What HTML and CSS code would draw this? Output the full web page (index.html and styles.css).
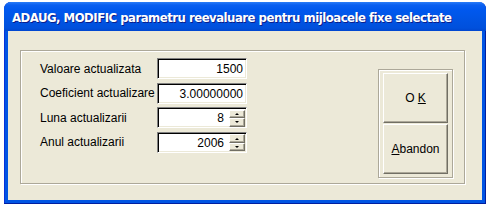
FILE: index.html
```html
<!DOCTYPE html>
<html>
<head>
<meta charset="utf-8">
<link rel="stylesheet" href="styles.css">
</head>
<body>
<div class="window">
  <div class="titlebar"><span class="title">ADAUG, MODIFIC parametru reevaluare pentru mijloacele fixe selectate</span></div>
  <div class="client">
    <div class="group">
      <div class="fields">
        <div class="row"><span class="label">Valoare actualizata</span><div class="input"><span class="val">1500</span></div></div>
        <div class="row"><span class="label">Coeficient actualizare</span><div class="input"><span class="val">3.00000000</span></div></div>
        <div class="row"><span class="label">Luna actualizarii</span><div class="input"><span class="val">8</span><div class="spinner"><div class="sbtn"><span class="arr up"></span></div><div class="sbtn"><span class="arr down"></span></div></div></div></div>
        <div class="row"><span class="label">Anul actualizarii</span><div class="input"><span class="val">2006</span><div class="spinner"><div class="sbtn"><span class="arr up"></span></div><div class="sbtn"><span class="arr down"></span></div></div></div></div>
      </div>
      <div class="btnpanel">
        <div class="btn"><span>O <u>K</u></span></div>
        <div class="btn"><span><u>A</u>bandon</span></div>
      </div>
    </div>
  </div>
</div>
</body>
</html>
```

FILE: styles.css
```css
* { box-sizing: border-box; }
html, body { margin: 0; padding: 0; background: #fff; }
body { font-family: "Liberation Sans", Arial, sans-serif; font-size: 12px; color: #000; }

.window {
  margin: 2px 0 0 4px;
  width: 482px;
  height: 202px;
  display: flex;
  flex-direction: column;
  background: #0054e3;
  border-radius: 7px 7px 0 0;
  box-shadow: inset -1px -1px 0 #001ea0, inset 1px 0 0 #0831d9;
}
.titlebar {
  height: 29px;
  flex: none;
  border-radius: 7px 7px 0 0;
  background: linear-gradient(to bottom, #2a7cf8 0, #0a5ff0 3px, #0058ee 8px, #0054e3 18px, #0050dc 26px, #0046cf 29px);
  display: flex;
  align-items: center;
  padding: 1px 0 0 8px;
}
.title {
  color: #fff;
  font-family: "DejaVu Sans Condensed", "DejaVu Sans", sans-serif;
  font-weight: bold;
  font-size: 13px;
  letter-spacing: -0.5px;
  text-shadow: 1px 1px 0 #0a1e8c;
  white-space: nowrap;
}
.client {
  flex: 1;
  margin: 0 4px 4px 4px;
  background: #ece9d8;
  padding: 19px 0 0 12px;
}
.group {
  width: 445px;
  height: 134px;
  border: 1px solid #aca899;
  box-shadow: 1px 1px 0 #fff, inset 1px 1px 0 #fff;
  display: flex;
  align-items: flex-start;
  padding: 7px 0 0 19px;
}
.fields {
  display: flex;
  flex-direction: column;
  gap: 3.6px;
}
.row {
  display: flex;
  align-items: center;
  height: 21px;
}
.label {
  width: 117px;
  white-space: nowrap;
}
.input {
  width: 90px;
  height: 21px;
  background: #fff;
  border-top: 1px solid #808080;
  border-left: 1px solid #808080;
  border-right: 1px solid #fff;
  border-bottom: 1px solid #fff;
  box-shadow: inset 1px 1px 0 #000, inset -1px -1px 0 #ece9d8;
  display: flex;
  align-items: center;
  justify-content: flex-end;
  padding: 1px 3px 0 2px;
}
.val { flex: 1; text-align: right; }
.spinner {
  width: 16px;
  height: 17px;
  margin: 0 -2px 0 5px;
  display: flex;
  flex-direction: column;
}
.sbtn {
  flex: 1;
  background: #ece9d8;
  border-top: 1px solid #fff;
  border-left: 1px solid #fff;
  border-right: 1px solid #716f64;
  border-bottom: 1px solid #716f64;
  box-shadow: inset -1px -1px 0 #aca899;
  display: flex;
  align-items: center;
  justify-content: center;
}
.arr { width: 0; height: 0; border-left: 2px solid transparent; border-right: 2px solid transparent; }
.arr.up { border-bottom: 2px solid #000; }
.arr.down { border-top: 2px solid #000; }

.btnpanel {
  margin: 11px 11px 0 auto;
  width: 75px;
  border: 1px solid #aca899;
  box-shadow: 1px 1px 0 #fff, inset 1px 1px 0 #fff;
  padding: 3px 4px;
  display: flex;
  flex-direction: column;
  gap: 1px;
}
.btn {
  width: 65px;
  height: 50px;
  background: #ece9d8;
  border-top: 1px solid #fff;
  border-left: 1px solid #fff;
  border-right: 1px solid #716f64;
  border-bottom: 1px solid #716f64;
  box-shadow: inset -1px -1px 0 #aca899;
  display: flex;
  align-items: center;
  justify-content: center;
  white-space: pre;
}
```
